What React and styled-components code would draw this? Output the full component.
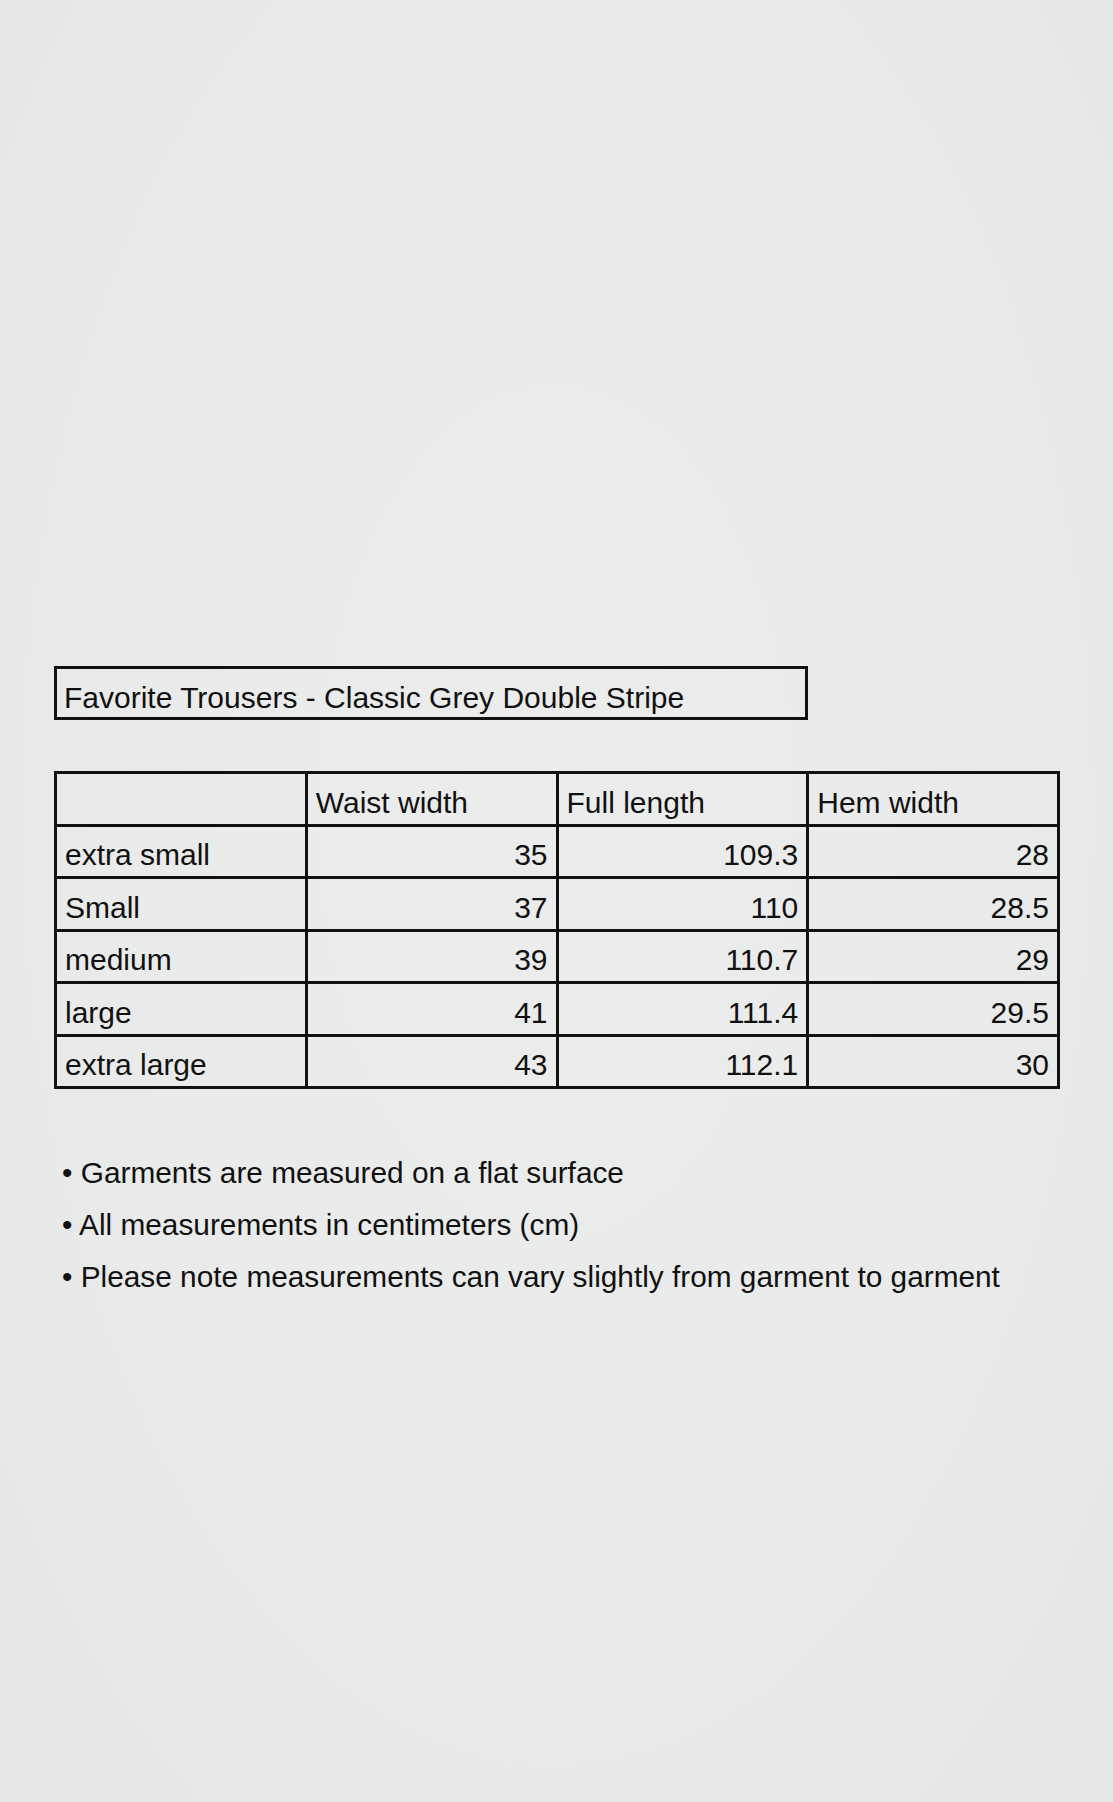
import React from 'react';
import styled, { createGlobalStyle } from 'styled-components';

const GlobalStyle = createGlobalStyle`
  html, body {
    margin: 0;
    padding: 0;
  }
  body {
    background: radial-gradient(ellipse at 50% 45%, #ebecec 0%, #e9eaea 60%, #e4e5e5 100%);
    min-height: 1802px;
    font-family: "Liberation Sans", Arial, Helvetica, sans-serif;
    color: #111;
  }
`;

const Page = styled.div`
  width: 1113px;
  min-height: 1802px;
  box-sizing: border-box;
  padding: 666px 0 0 54px;
`;

const TitleBox = styled.div`
  width: 754px;
  box-sizing: border-box;
  border: 3px solid #111;
  padding: 13.5px 7px 4.5px;
  font-size: 30px;
  line-height: 30px;
  white-space: nowrap;
`;

const SizeTable = styled.table`
  margin-top: 51px;
  width: 1006px;
  border-collapse: collapse;
  table-layout: fixed;
  font-size: 30px;
  line-height: 30px;
`;

const Cell = styled.td`
  border: 3px solid #111;
  height: 30px;
  padding: 13.5px 8px 6px 8px;
  vertical-align: bottom;
  font-weight: 400;
  text-align: ${p => (p.$num ? 'right' : 'left')};
  white-space: nowrap;
`;

const Notes = styled.ul`
  list-style: none;
  margin: 58px 0 0;
  padding: 0 0 0 8px;
  font-size: 29.8px;
  line-height: 52px;
`;

const Note = styled.li`
  white-space: nowrap;
`;

const columns = ['Waist width', 'Full length', 'Hem width'];

const rows = [
  ['extra small', '35', '109.3', '28'],
  ['Small', '37', '110', '28.5'],
  ['medium', '39', '110.7', '29'],
  ['large', '41', '111.4', '29.5'],
  ['extra large', '43', '112.1', '30'],
];

const notes = [
  'Garments are measured on a flat surface',
  'All measurements in centimeters (cm)',
  'Please note measurements can vary slightly from garment to garment',
];

export default function App() {
  return (
    <>
      <GlobalStyle />
      <Page>
        <TitleBox>Favorite Trousers - Classic Grey Double Stripe</TitleBox>
        <SizeTable>
          <thead>
            <tr>
              <Cell as="th"></Cell>
              {columns.map(c => (
                <Cell as="th" key={c}>{c}</Cell>
              ))}
            </tr>
          </thead>
          <tbody>
            {rows.map(r => (
              <tr key={r[0]}>
                <Cell>{r[0]}</Cell>
                <Cell $num>{r[1]}</Cell>
                <Cell $num>{r[2]}</Cell>
                <Cell $num>{r[3]}</Cell>
              </tr>
            ))}
          </tbody>
        </SizeTable>
        <Notes>
          {notes.map(n => (
            <Note key={n}>• {n}</Note>
          ))}
        </Notes>
      </Page>
    </>
  );
}
